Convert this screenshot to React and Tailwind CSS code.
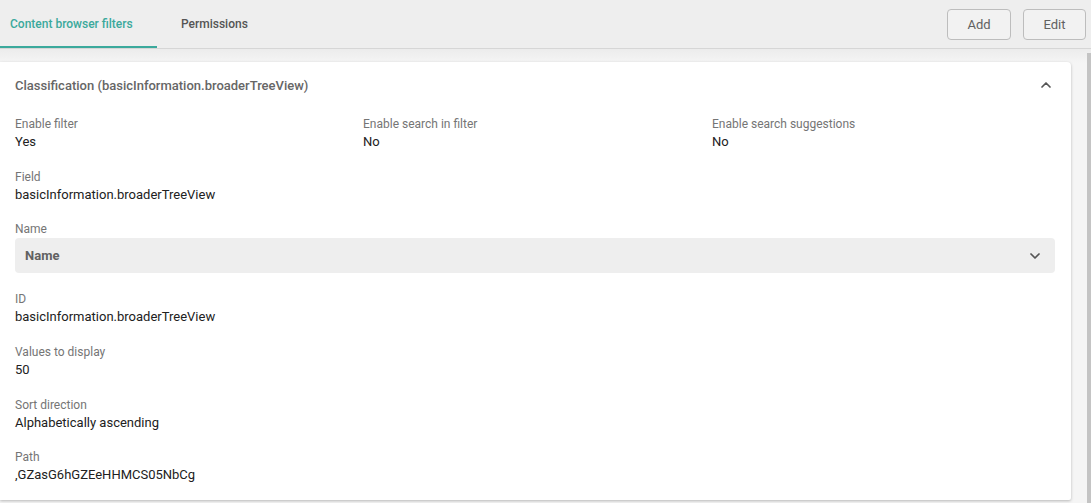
import { ChevronUp, ChevronDown } from "lucide-react";

const Field = ({ label, value }) => (
  <div className="flex flex-col">
    <span className="text-[12px] leading-[18px] text-[#757575]">{label}</span>
    <span className="text-[13px] leading-[18px] text-[#212121]">{value}</span>
  </div>
);

export default function App() {
  return (
    <div className="w-[1091px] h-[503px] overflow-hidden flex flex-col bg-[#f5f5f5] font-['Roboto',sans-serif]">
      {/* top bar */}
      <div className="h-[49px] shrink-0 flex items-stretch justify-between bg-[#eeeeee] border-b border-[#d6d6d6]">
        <div className="flex items-stretch">
          <div className="w-[157px] flex items-center pl-[10px] text-[12px] font-medium text-[#3ba99c] border-b-2 border-[#3ba99c] pt-[2px]">
            Content browser filters
          </div>
          <div className="flex items-center pl-[24px] text-[12px] font-medium text-[#555555]">
            Permissions
          </div>
        </div>
        <div className="flex items-start gap-[12px] pt-[9px] pr-[5px]">
          <button className="w-[64px] h-[31px] rounded-[4px] border border-[#bdbdbd] bg-[#f2f2f2] text-[13px] text-[#616161]">
            Add
          </button>
          <button className="w-[63px] h-[31px] rounded-[4px] border border-[#bdbdbd] bg-[#f2f2f2] text-[13px] text-[#616161]">
            Edit
          </button>
        </div>
      </div>

      {/* content */}
      <div className="flex-1 flex min-h-0 bg-gradient-to-b from-[#ececec] to-[#f5f5f5] bg-[length:100%_14px] bg-no-repeat">
        <div className="flex-1 pt-[13px] pr-[16px] min-w-0">
          <div className="bg-white rounded-tr-[4px] rounded-br-[2px] shadow-[0_1px_3px_rgba(0,0,0,0.25)] h-[438px] px-[15px] pr-[16px]">
            <div className="h-[46px] flex items-center justify-between">
              <span className="text-[13px] font-medium text-[#666666] pt-[1px]">
                Classification (basicInformation.broaderTreeView)
              </span>
              <ChevronUp className="w-[16px] h-[16px] text-[#555555] mr-[1px]" strokeWidth={2.6} />
            </div>

            <div className="grid grid-cols-[344px_345px_1fr] gap-x-[4px] pt-[7px]">
              <Field label="Enable filter" value="Yes" />
              <Field label="Enable search in filter" value="No" />
              <Field label="Enable search suggestions" value="No" />
            </div>

            <div className="pt-[17px]">
              <Field label="Field" value="basicInformation.broaderTreeView" />
            </div>

            <div className="pt-[16px]">
              <span className="block text-[12px] leading-[18px] text-[#757575]">Name</span>
              <div className="h-[35px] rounded-[4px] bg-[#eeeeee] flex items-center justify-between pl-[10px] pr-[12px]">
                <span className="text-[13px] font-bold text-[#616161]">Name</span>
                <ChevronDown className="w-[16px] h-[16px] text-[#555555]" strokeWidth={2.6} />
              </div>
            </div>

            <div className="pt-[17px]">
              <Field label="ID" value="basicInformation.broaderTreeView" />
            </div>
            <div className="pt-[17px]">
              <Field label="Values to display" value="50" />
            </div>
            <div className="pt-[17px]">
              <Field label="Sort direction" value="Alphabetically ascending" />
            </div>
            <div className="pt-[16px]">
              <Field label="Path" value=",GZasG6hGZEeHHMCS05NbCg" />
            </div>
          </div>
        </div>
        <div className="w-[4px] shrink-0 mt-[4px] bg-[#c4c4c4]" />
      </div>
    </div>
  );
}
